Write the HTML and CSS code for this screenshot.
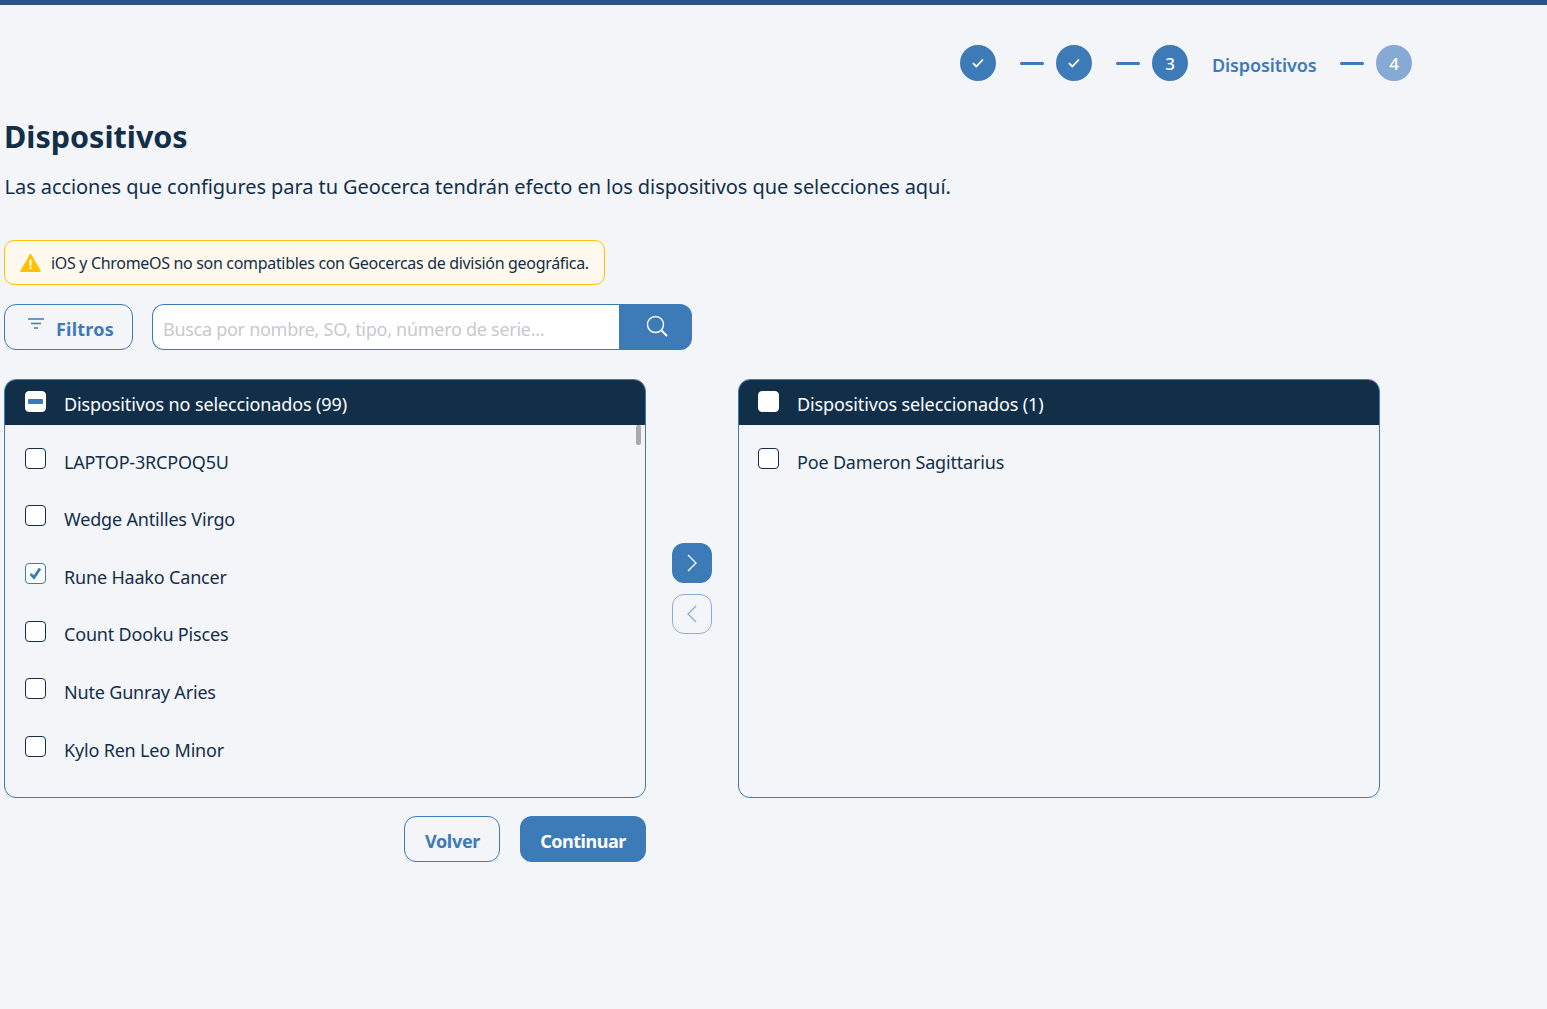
FILE: index.html
```html
<!DOCTYPE html>
<html lang="es">
<head>
<meta charset="utf-8">
<title>Dispositivos</title>
<link rel="stylesheet" href="styles.css">
</head>
<body>
<div class="topbar"></div>
<main class="page">
  <nav class="stepper">
    <span class="step"><svg width="14" height="14" viewBox="0 0 14 14"><path d="M2 7.200 5.300 10.500 12 3.500" fill="none" stroke="#fff" stroke-width="1.800"/></svg></span>
    <span class="dash"></span>
    <span class="step"><svg width="14" height="14" viewBox="0 0 14 14"><path d="M2 7.200 5.300 10.500 12 3.500" fill="none" stroke="#fff" stroke-width="1.800"/></svg></span>
    <span class="dash"></span>
    <span class="step">3</span>
    <span class="step-label">Dispositivos</span>
    <span class="dash"></span>
    <span class="step step-off">4</span>
  </nav>
  <h1 class="title">Dispositivos</h1>
  <p class="lead">Las acciones que configures para tu Geocerca tendrán efecto en los dispositivos que selecciones aquí.</p>
  <div class="alert">
    <svg width="21" height="20" viewBox="0 0 22 20"><path d="M11 1.200 21 18.600H1Z" fill="#ffc107" stroke="#ffc107" stroke-width="1.600" stroke-linejoin="round"/><rect x="10" y="6.400" width="2" height="6.600" fill="#fff"/><rect x="10" y="14.200" width="2" height="2" fill="#fff"/></svg>
    <span>iOS y ChromeOS no son compatibles con Geocercas de división geográfica.</span>
  </div>
  <div class="toolbar">
    <button class="btn btn-outline btn-filter"><svg width="18" height="14" viewBox="0 0 18 14"><path d="M1 2h16M4 6.500h10M7 11h4" stroke="#3d7ab8" stroke-width="1.400" fill="none"/></svg><span>Filtros</span></button>
    <div class="search">
      <span class="search-input">Busca por nombre, SO, tipo, número de serie...</span>
      <span class="search-btn"><svg width="24" height="24" viewBox="0 0 24 24"><circle cx="10.500" cy="10.500" r="8" fill="none" stroke="#fff" stroke-width="1.400"/><path d="M16.500 16.500 22 22" stroke="#fff" stroke-width="2" fill="none"/></svg></span>
    </div>
  </div>
  <div class="transfer">
    <section class="panel">
      <header class="panel-head"><span class="box box-head box-mixed"></span>Dispositivos no seleccionados (99)</header>
      <div class="panel-body">
        <span class="scrollthumb"></span>
        <div class="row"><span class="box"></span>LAPTOP-3RCPOQ5U</div>
        <div class="row"><span class="box"></span>Wedge Antilles Virgo</div>
        <div class="row"><span class="box box-checked"><svg width="15" height="15" viewBox="0 0 15 15"><path d="M2.500 8 6 11.500 12 2.500" fill="none" stroke="#3d7ab8" stroke-width="2.800"/></svg></span>Rune Haako Cancer</div>
        <div class="row"><span class="box"></span>Count Dooku Pisces</div>
        <div class="row"><span class="box"></span>Nute Gunray Aries</div>
        <div class="row"><span class="box"></span>Kylo Ren Leo Minor</div>
      </div>
    </section>
    <div class="arrows">
      <span class="arrow arrow-on"><svg width="12" height="20" viewBox="0 0 12 20"><path d="M2 2 10 10 2 18" fill="none" stroke="#fff" stroke-width="1.300"/></svg></span>
      <span class="arrow arrow-off"><svg width="12" height="20" viewBox="0 0 12 20"><path d="M10 2 2 10 10 18" fill="none" stroke="#8aadd4" stroke-width="1.300"/></svg></span>
    </div>
    <section class="panel panel-right">
      <header class="panel-head"><span class="box box-head"></span>Dispositivos seleccionados (1)</header>
      <div class="panel-body">
        <div class="row"><span class="box"></span>Poe Dameron Sagittarius</div>
      </div>
    </section>
  </div>
  <div class="actions">
    <button class="btn btn-outline btn-back">Volver</button>
    <button class="btn btn-solid">Continuar</button>
  </div>
</main>
</body>
</html>
```

FILE: styles.css
```css
* { box-sizing: border-box; }
html, body { margin: 0; height: 100%; }
body {
  background: #f4f5f9;
  color: #122f4a;
  font-family: "Noto Sans", sans-serif;
  min-height: 1009px;
  overflow: hidden;
}
.topbar { height: 5px; background: #2a5482; }
.page { padding: 0 0 0 4px; width: 1412px; }
.stepper {
  display: flex;
  align-items: center;
  justify-content: flex-end;
  gap: 12px;
  height: 36px;
  margin-top: 40px;
}
.step {
  width: 36px;
  height: 36px;
  margin-right: 12px;
  border-radius: 50%;
  background: #3d7ab8;
  color: #fff;
  font-size: 17px;
  font-weight: 500;
  display: flex;
  align-items: center;
  justify-content: center;
}
.step-off { background: #86aad3; margin-right: 0; }
.dash { width: 24px; height: 3px; border-radius: 2px; background: #3d7ab8; }
.step-label { width: 104px; color: #3d7ab8; font-size: 18px; font-weight: 600; letter-spacing: -0.1px; margin-right: 12px; padding-top: 4px; white-space: nowrap; }
.title { margin: 33px 0 0; font-size: 30.500px; line-height: 44px; font-weight: 700; }
.lead { margin: 15px 0 0 0.600px; font-size: 20px; line-height: 28px; letter-spacing: -0.07px; }
.alert {
  margin-top: 39px;
  width: 601px;
  height: 45px;
  background: #fff8ec;
  border: 1px solid #ffc107;
  border-radius: 10px;
  display: flex;
  align-items: center;
  gap: 10px;
  padding-left: 15px;
  font-size: 16px;
  letter-spacing: -0.32px;
  white-space: nowrap;
}
.toolbar { display: flex; gap: 19px; margin-top: 19px; }
.btn {
  font-family: inherit;
  font-size: 18px;
  font-weight: 700;
  height: 46px;
  border-radius: 12px;
  padding: 4px 0 0;
  letter-spacing: -0.1px;
}
.btn-outline { background: transparent; color: #3d7ab8; border: 1px solid #3d7ab8; }
.btn-solid { background: #3d7ab8; color: #fff; border: none; width: 126px; letter-spacing: -0.5px; }
.btn-filter { width: 129px; display: flex; align-items: center; justify-content: center; gap: 11px; padding-left: 4px; letter-spacing: 0.25px; }
.btn-filter svg { position: relative; top: -5px; }
.btn-back { width: 96px; padding-left: 1px; letter-spacing: -0.3px; }
.search { display: flex; width: 540px; height: 46px; }
.search-input {
  flex: 1;
  background: #fff;
  border: 1px solid #3d7ab8;
  border-right: none;
  border-radius: 12px 0 0 12px;
  color: #c8c9ce;
  font-size: 18px;
  letter-spacing: -0.28px;
  line-height: 48px;
  padding-left: 10px;
}
.search-btn {
  width: 73px;
  background: #3d7ab8;
  border-radius: 0 12px 12px 0;
  display: flex;
  align-items: center;
  justify-content: center;
  padding: 0 0 2px 2px;
}
.transfer { display: flex; margin-top: 29px; }
.panel {
  width: 642px;
  height: 419px;
  border: 1px solid #3d7ab8;
  border-radius: 12px;
  overflow: hidden;
}
.panel-head {
  height: 45px;
  background: #122f4a;
  color: #fff;
  font-size: 18px;
  letter-spacing: -0.12px;
  display: flex;
  align-items: center;
  padding: 2px 0 0 59px;
  position: relative;
}
.panel-body { position: relative; padding-top: 7.800px; }
.row {
  height: 57.600px;
  display: flex;
  align-items: center;
  padding-left: 59px;
  font-size: 18px;
  letter-spacing: -0.18px;
  position: relative;
}
.panel-right .row, .panel-right .panel-head { padding-left: 58px; }
.box {
  position: absolute;
  left: 20px;
  top: 15px;
  width: 21px;
  height: 21px;
  border: 1px solid #122f4a;
  border-radius: 4px;
  background: #fff;
  display: flex;
  align-items: center;
  justify-content: center;
}
.panel-right .box { left: 19px; }
.box-head { top: 11px; border-color: #fff; }
.box-mixed::after { content: ""; width: 15px; height: 5px; border-radius: 1px; background: #3d7ab8; }
.box-checked { border-color: #3d7ab8; }
.scrollthumb {
  position: absolute;
  right: 4px;
  top: 0;
  width: 5px;
  height: 20px;
  background: #a9a9b0;
  border-radius: 2px;
}
.arrows {
  width: 92px;
  display: flex;
  flex-direction: column;
  align-items: center;
  gap: 11px;
  padding-top: 164px;
}
.arrow {
  width: 40px;
  height: 40px;
  border-radius: 12px;
  display: flex;
  align-items: center;
  justify-content: center;
}
.arrow-on { background: #3d7ab8; }
.arrow-off { border: 1px solid #8aadd4; }
.actions { width: 642px; display: flex; justify-content: flex-end; gap: 20px; margin-top: 18px; }
```
